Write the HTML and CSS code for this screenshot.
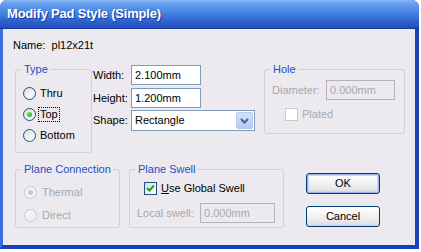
FILE: index.html
```html
<!DOCTYPE html>
<html>
<head>
<meta charset="utf-8">
<link rel="stylesheet" href="styles.css">
</head>
<body>
<div class="window">
  <div class="titlebar"><span class="title">Modify Pad Style (Simple)</span></div>
  <div class="client">
    <div class="name-row">Name:&nbsp; pl12x21t</div>
    <div class="row row-top">
      <fieldset class="group type-group">
        <legend>Type</legend>
        <div class="options">
          <div class="opt"><span class="radio"></span><span class="otext">Thru</span></div>
          <div class="opt"><span class="radio checked"></span><span class="otext focus">Top</span></div>
          <div class="opt"><span class="radio"></span><span class="otext">Bottom</span></div>
        </div>
      </fieldset>
      <div class="fields">
        <div class="field"><span class="flabel">Width:</span><span class="edit w70">2.100mm</span></div>
        <div class="field"><span class="flabel">Height:</span><span class="edit w70">1.200mm</span></div>
        <div class="field field-combo"><span class="flabel">Shape:</span>
          <span class="combo"><span class="combo-text">Rectangle</span>
            <span class="combo-btn"><svg width="9" height="6" viewBox="0 0 9 6"><path d="M1 1 L4.5 4.5 L8 1" fill="none" stroke="#4D6185" stroke-width="2"/></svg></span>
          </span>
        </div>
      </div>
      <fieldset class="group hole-group">
        <legend>Hole</legend>
        <div class="hole-inner">
          <div class="field"><span class="dlabel dis">Diameter:</span><span class="edit disabled w69">0.000mm</span></div>
          <div class="chk-row plated"><span class="check disabled"></span><span class="dis">Plated</span></div>
        </div>
      </fieldset>
    </div>
    <div class="row row-bottom">
      <fieldset class="group plane-group">
        <legend>Plane Connection</legend>
        <div class="options plane-options">
          <div class="opt popt"><span class="radio disabled checked"></span><span class="otext dis">Thermal</span></div>
          <div class="opt popt"><span class="radio disabled"></span><span class="otext dis">Direct</span></div>
        </div>
      </fieldset>
      <fieldset class="group swell-group">
        <legend>Plane Swell</legend>
        <div class="swell-inner">
          <div class="chk-row global"><span class="check"><svg width="9" height="9" viewBox="0 0 9 9"><path d="M1 4 L3.5 6.5 L8 1.5" fill="none" stroke="#21A121" stroke-width="2"/></svg></span><span><u>U</u>se Global Swell</span></div>
          <div class="field local"><span class="llabel dis">Local swell:</span><span class="edit disabled w75">0.000mm</span></div>
        </div>
      </fieldset>
      <div class="buttons">
        <div class="btn default"><span>OK</span></div>
        <div class="btn"><span>Cancel</span></div>
      </div>
    </div>
  </div>
</div>
</body>
</html>
```
FILE: styles.css
```css
html, body {
  margin: 0;
  padding: 0;
  background: #ffffff;
}
body {
  font-family: "Liberation Sans", Arial, sans-serif;
  font-size: 11px;
  line-height: 13px;
  color: #000;
}
.window {
  width: 419px;
  height: 249px;
  display: flex;
  flex-direction: column;
  border-radius: 7px 7px 0 0;
  overflow: hidden;
  background: #2B5BD6;
}
.titlebar {
  height: 28px;
  flex: none;
  border-bottom: 1px solid #16379A;
  background: linear-gradient(#8AB8F4 0, #6AA2EE 3px, #4E8BE4 10px, #3C78DC 16px, #2F62D0 21px, #2550BE 27px);
  display: flex;
  align-items: center;
  padding-left: 7px;
  padding-bottom: 1px;
  box-sizing: border-box;
  height: 29px;
}
.title {
  color: #fff;
  font-weight: bold;
  font-size: 13px;
  letter-spacing: -0.2px;
  text-shadow: 1px 1px 0 #1B3A9A;
}
.client {
  flex: 1;
  background: #ECEAEE;
  border-style: solid;
  border-width: 0 4px 4px 3px;
  border-color: #2C5ED8 #1A42B8 #1A42B8 #3A6DE0;
  display: flex;
  flex-direction: column;
}
.name-row {
  padding: 10px 0 0 10px;
  height: 13px;
}
.row {
  display: flex;
  padding-left: 12px;
}
.row-top {
  margin-top: 11px;
}
.row-bottom {
  margin-top: 10px;
}
.group {
  margin: 0;
  padding: 0;
  border: 1px solid #D2D0D8;
  border-radius: 3px;
  box-sizing: border-box;
  min-width: 0;
}
.group legend {
  color: #1E4FC8;
  padding: 0 2px;
  margin-left: 6px;
  line-height: 13px;
}
.type-group {
  width: 77px;
  height: 90px;
}
.options {
  display: flex;
  flex-direction: column;
  padding-left: 7px;
  margin-top: 7px;
}
.opt {
  height: 21px;
  display: flex;
  align-items: center;
}
.otext {
  margin-left: 4px;
}
.focus {
  outline: 1px dotted #000;
  outline-offset: 0;
  padding: 0 1px;
  margin-left: 3px;
}
.radio {
  width: 13px;
  height: 13px;
  box-sizing: border-box;
  border: 1px solid #1C5180;
  border-radius: 50%;
  background: linear-gradient(135deg, #DCDCD7 0%, #F0F0EC 50%, #FFFFFF 100%);
  display: flex;
  align-items: center;
  justify-content: center;
  flex: none;
}
.radio.checked::after {
  content: "";
  width: 5px;
  height: 5px;
  border-radius: 50%;
  background: radial-gradient(circle at 35% 35%, #66E066, #21A121);
}
.radio.disabled {
  border-color: #C9C7CF;
  background: #F2F1F4;
}
.radio.disabled.checked::after {
  background: #C9C7CF;
}
.fields {
  display: flex;
  flex-direction: column;
  gap: 3px;
  margin-top: 2px;
}
.field {
  display: flex;
  align-items: center;
}
.flabel {
  width: 39px;
  padding-left: 1px;
  box-sizing: border-box;
}
.edit {
  height: 20px;
  box-sizing: border-box;
  border: 1px solid #7F9DB9;
  background: #fff;
  padding-left: 3px;
  display: flex;
  align-items: center;
}
.edit.disabled {
  border-color: #B4B3B9;
  background: #ECEAEE;
  color: #A9A8AD;
}
.w70 { width: 70px; }
.w69 { width: 69px; }
.w75 { width: 75px; }
.field-combo {
  margin-top: -1px;
}
.combo {
  width: 124px;
  height: 21px;
  box-sizing: border-box;
  border: 1px solid #7F9DB9;
  background: #fff;
  display: flex;
  align-items: center;
  padding: 1px;
}
.combo-text {
  flex: 1;
  padding-left: 2px;
}
.combo-btn {
  width: 17px;
  height: 17px;
  box-sizing: border-box;
  border: 1px solid #B7CBF4;
  border-radius: 2px;
  background: linear-gradient(#D4E1FC, #B6CAF7);
  display: flex;
  align-items: center;
  justify-content: center;
}
.hole-group {
  width: 141px;
  height: 71px;
  margin-left: 9px;
}
.hole-inner {
  padding-left: 7px;
  margin-top: 4px;
}
.dlabel {
  width: 54px;
}
.dis {
  color: #A9A8AD;
}
.chk-row {
  display: flex;
  align-items: center;
  height: 13px;
}
.plated {
  margin-top: 8px;
  padding-left: 13px;
}
.check {
  width: 13px;
  height: 13px;
  box-sizing: border-box;
  border: 1px solid #1C5180;
  background: linear-gradient(135deg, #DCDCD7 0%, #F4F4F0 60%, #FFFFFF 100%);
  display: flex;
  align-items: center;
  justify-content: center;
  margin-right: 4px;
  flex: none;
}
.check.disabled {
  border-color: #C9C7CF;
  background: #FFFFFF;
}
.plane-group {
  width: 105px;
  height: 65px;
}
.plane-options {
  padding-left: 8px;
  margin-top: 5px;
}
.popt {
  height: 23px;
}
.popt .otext {
  margin-left: 5px;
}
.swell-group {
  width: 155px;
  height: 65px;
  margin-left: 9px;
}
.swell-inner {
  padding-left: 14px;
  margin-top: 6px;
}
.global {
  height: 13px;
}
.local {
  margin-top: 8px;
  margin-left: -7px;
}
.llabel {
  width: 63px;
}
.buttons {
  display: flex;
  flex-direction: column;
  margin-left: 22px;
  margin-top: 10px;
  gap: 12px;
}
.btn {
  width: 74px;
  height: 21px;
  box-sizing: border-box;
  border: 1px solid #003C74;
  border-radius: 3px;
  background: linear-gradient(#FFFFFF 0%, #F4F4F6 40%, #E6E6EA 80%, #D4D4DC 100%);
  display: flex;
  align-items: center;
  justify-content: center;
}
.btn.default {
  box-shadow: inset 0 0 0 1px #9CB4EA, inset 0 0 0 2px #C8D6F4;
}
```
